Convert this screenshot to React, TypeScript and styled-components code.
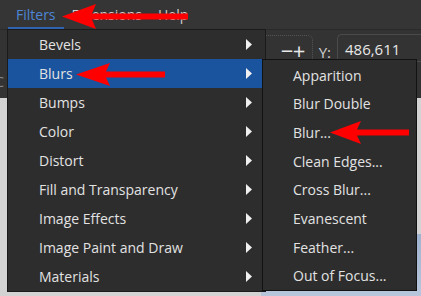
import React from 'react'
import styled, { createGlobalStyle } from 'styled-components'

const GlobalStyle = createGlobalStyle`
  html, body { margin: 0; padding: 0; }
  body {
    width: 421px;
    height: 296px;
    overflow: hidden;
    background: #d3d3d3;
    font-family: "Open Sans", "Noto Sans", sans-serif;
  }
`

const mainItems = [
  'Bevels',
  'Blurs',
  'Bumps',
  'Color',
  'Distort',
  'Fill and Transparency',
  'Image Effects',
  'Image Paint and Draw',
  'Materials',
]

const blurItems = [
  'Apparition',
  'Blur Double',
  'Blur...',
  'Clean Edges...',
  'Cross Blur...',
  'Evanescent',
  'Feather...',
  'Out of Focus...',
]

const Caret = () => (
  <svg width="6" height="11" viewBox="0 0 6 11">
    <polygon points="0,0 6,5.5 0,11" fill="#f0f0f0" />
  </svg>
)

const App: React.FC = () => {
  return (
    <Page>
      <GlobalStyle />
      <MenuBar>
        <TopItem active>Filters</TopItem>
        <TopItem>Extensions</TopItem>
        <TopItem>Help</TopItem>
      </MenuBar>
      <Workspace>
        <ToolStrip>
          <SidePeek>C</SidePeek>
          <Tools>
            <DashedBox>
              <ZoomGlyph>−</ZoomGlyph>
              <ZoomGlyph>+</ZoomGlyph>
            </DashedBox>
            <FieldLabel>Y:</FieldLabel>
            <Field>486,611</Field>
          </Tools>
        </ToolStrip>
        <Canvas>
          <Picture />
        </Canvas>
      </Workspace>

      <Dropdown>
        {mainItems.map((label) => (
          <Item key={label} selected={label === 'Blurs'}>
            <span>{label}</span>
            <Caret />
          </Item>
        ))}
      </Dropdown>

      <SubMenu>
        {blurItems.map((label) => (
          <SubItem key={label}>{label}</SubItem>
        ))}
      </SubMenu>

      <Arrows width="421" height="296" viewBox="0 0 421 296">
        <polygon points="62,16.5 96,4 92,13.5 188,13.5 188,19.5 92,19.5 96,29" fill="#ff0000" />
        <polygon points="76,74.5 110,63 106,71.5 165,71.5 165,77.5 106,77.5 110,86" fill="#ff0000" />
        <polygon points="330,132.5 361,121 357,129.5 409,129.5 409,135.5 357,135.5 361,144" fill="#ff0000" />
      </Arrows>
    </Page>
  )
}

export default App

const Page = styled.div`
  position: relative;
  width: 421px;
  height: 296px;
  overflow: hidden;
`

const MenuBar = styled.div`
  height: 29px;
  background: #353535;
  display: flex;
  align-items: center;
  padding-left: 8px;
  box-sizing: border-box;
`

const TopItem = styled.div<{ active?: boolean }>`
  height: 29px;
  display: flex;
  align-items: center;
  padding: 2px 8px 0;
  font-size: 14px;
  color: ${({ active }) => (active ? '#4d86d6' : '#d0d0d0')};
  border-bottom: 2px solid ${({ active }) => (active ? '#2f63b0' : 'transparent')};
  box-sizing: border-box;
`

const Workspace = styled.div`
  display: flex;
  flex-direction: column;
  height: 267px;
`

const ToolStrip = styled.div`
  height: 69px;
  background: #333333;
  border-top: 1px solid #2a2a2a;
  display: flex;
  justify-content: space-between;
  align-items: flex-start;
  box-sizing: border-box;
`

const SidePeek = styled.div`
  margin-top: 42px;
  font-size: 14px;
  color: #888;
  width: 4px;
  overflow: hidden;
  direction: rtl;
`

const Tools = styled.div`
  display: flex;
  align-items: center;
  gap: 6px;
  margin-top: 4px;
`

const DashedBox = styled.div`
  width: 55px;
  height: 27px;
  border: 1px dotted #555;
  border-radius: 0 5px 0 0;
  display: flex;
  align-items: flex-end;
  justify-content: flex-end;
  padding-right: 7px;
  box-sizing: border-box;
`

const ZoomGlyph = styled.span`
  font-size: 22px;
  line-height: 22px;
  color: #e8e8e8;
  width: 12px;
  text-align: center;
`

const FieldLabel = styled.span`
  font-size: 15px;
  color: #cfcfcf;
  margin-top: 8px;
`

const Field = styled.div`
  width: 84px;
  height: 28px;
  border: 1px solid #4a4a4a;
  border-radius: 5px 0 0 0;
  border-right: none;
  font-size: 15px;
  color: #e8e8e8;
  padding-left: 7px;
  display: flex;
  align-items: flex-end;
  box-sizing: border-box;
  padding-bottom: 2px;
`

const Canvas = styled.div`
  flex: 1;
  background: #d3d3d3;
  display: flex;
  justify-content: flex-end;
  align-items: flex-end;
`

const Picture = styled.div`
  width: 160px;
  height: 62px;
  background: linear-gradient(180deg, #9fb3cf 0%, #b7c6db 100%);
`

const Dropdown = styled.div`
  position: absolute;
  left: 7px;
  top: 29px;
  width: 259px;
  background: #2d2d2d;
  border: 1px solid #1a1a1a;
  display: flex;
  flex-direction: column;
  box-sizing: border-box;
`

const Item = styled.div<{ selected?: boolean }>`
  height: 29px;
  display: flex;
  align-items: center;
  justify-content: space-between;
  padding: 0 13px 0 31px;
  font-size: 14px;
  color: #e2e2e2;
  background: ${({ selected }) => (selected ? '#1a539e' : 'transparent')};
`

const SubMenu = styled.div`
  position: absolute;
  left: 262px;
  top: 59px;
  width: 155px;
  height: 232px;
  background: #2d2d2d;
  border: 1px solid #121212;
  box-sizing: border-box;
  padding-top: 1px;
  display: flex;
  flex-direction: column;
`

const SubItem = styled.div`
  height: 28.8px;
  display: flex;
  align-items: center;
  padding-left: 30px;
  font-size: 14px;
  color: #e2e2e2;
`

const Arrows = styled.svg`
  position: absolute;
  left: 0;
  top: 0;
  pointer-events: none;
`
